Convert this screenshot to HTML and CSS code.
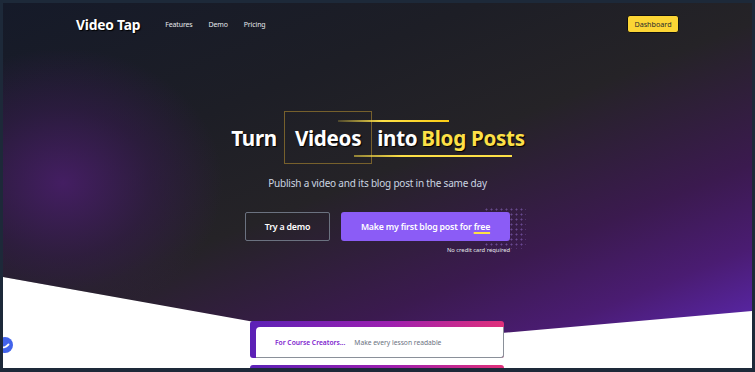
FILE: index.html
```html
<!DOCTYPE html>
<html lang="en">
<head>
<meta charset="utf-8">
<title>Video Tap</title>
<link rel="stylesheet" href="styles.css">
</head>
<body>
<div class="frame">
  <section class="hero">
    <div class="glow"></div>
    <nav class="nav">
      <div class="nav-left">
        <span class="logo">Video Tap</span>
        <ul class="links">
          <li>Features</li>
          <li>Demo</li>
          <li>Pricing</li>
        </ul>
      </div>
      <button class="dash">Dashboard</button>
    </nav>
    <div class="hero-body">
      <h1 class="title">
        <span>Turn</span>
        <span class="boxed">Videos</span>
        <span>into</span>
        <span class="yellow">Blog Posts</span>
        <i class="line line-top"></i>
        <i class="line line-bottom"></i>
      </h1>
      <p class="sub">Publish a video and its blog post in the same day</p>
      <div class="actions">
        <button class="btn-outline">Try a demo</button>
        <div class="cta-wrap">
          <div class="dots"></div>
          <button class="btn-primary">Make my first blog post for <u>free</u></button>
          <span class="note">No credit card required</span>
        </div>
      </div>
    </div>
  </section>
  <div class="cards">
    <div class="card">
      <div class="card-inner">
        <span class="tag">For Course Creators...</span>
        <span class="desc">Make every lesson readable</span>
      </div>
    </div>
    <div class="card card-next"></div>
  </div>
  <div class="chat">
    <svg viewBox="0 0 16 16" width="16" height="16"><path d="M4.5 9.5 Q7 12 11.5 7.5" fill="none" stroke="#fff" stroke-width="1.8" stroke-linecap="round"/></svg>
  </div>
</div>
</body>
</html>
```

FILE: styles.css
```css
* { box-sizing: border-box; margin: 0; padding: 0; }
html, body { width: 755px; height: 372px; overflow: hidden; }
body { font-family: "Noto Sans", "Open Sans", sans-serif; background: #1d2939; }

.frame {
  position: relative;
  width: 755px;
  height: 372px;
  border: 3px solid #1d2939;
  border-bottom-width: 4px;
  background: linear-gradient(172deg, #f3eefc 0%, #ffffff 35%);
  overflow: hidden;
}

.hero {
  position: relative;
  height: 341px;
  clip-path: polygon(0 0, 100% 0, 100% 308px, 50% 341px, 0 274px);
  background: linear-gradient(158deg, #151a29 0%, #1d1e26 30%, #252327 50%, #3b1a4f 72%, #4a1c72 85%, #5d29b6 100%);
}
.glow {
  position: absolute;
  left: -100px;
  top: 45px;
  width: 320px;
  height: 270px;
  border-radius: 50%;
  background: radial-gradient(closest-side, rgba(72, 30, 105, 0.9), rgba(58, 26, 84, 0.5) 55%, rgba(40, 20, 50, 0) 100%);
}

.nav {
  position: relative;
  height: 42px;
  padding: 0 73px 0 73px;
  display: flex;
  align-items: center;
  justify-content: space-between;
}
.nav-left { display: flex; align-items: center; gap: 25px; }
.logo { color: #fff; font-weight: 700; font-size: 13.8px; letter-spacing: -0.2px; text-shadow: 1px 1px 1px #000; }
.links { list-style: none; display: flex; gap: 16px; color: #e5e7eb; font-size: 7px; letter-spacing: -0.15px; }
.dash {
  font-family: inherit;
  font-size: 7.2px;
  color: #2b2b2b;
  background: #fcd535;
  border: 1px solid #111;
  border-radius: 3px;
  width: 52px;
  height: 18px;
  margin-top: -1px;
}

.hero-body {
  position: relative;
  display: flex;
  flex-direction: column;
  align-items: center;
  padding-top: 66px;
}
.title {
  position: relative;
  display: flex;
  align-items: center;
  gap: 7px;
  font-size: 20.6px;
  font-weight: 700;
  color: #fff;
  letter-spacing: -0.3px;
  text-shadow: 1px 1px 1px #000;
  margin-left: 1px;
}
.boxed {
  display: flex;
  align-items: center;
  height: 53px;
  padding: 0 10px;
  border: 1px solid rgba(190, 150, 50, 0.55);
  margin-right: -2px;
}
.yellow { color: #fde047; margin-left: -3px; }
.line { position: absolute; height: 2px; display: block; }
.line-top { left: 107px; width: 111px; top: 9px; background: linear-gradient(90deg, rgba(253, 224, 71, 0.2), #fde047 40%, #facc15); }
.line-bottom { left: 123px; width: 158px; top: 44px; background: linear-gradient(90deg, rgba(253, 224, 71, 0.5), #fde047 30%, #fde047); }

.sub {
  margin-top: 11px;
  color: #cbd5e1;
  font-size: 10px;
  letter-spacing: -0.2px;
  line-height: 16px;
}

.actions {
  margin-top: 21px;
  display: flex;
  gap: 11px;
  align-items: flex-start;
}
.btn-outline {
  font-family: inherit;
  width: 85px;
  height: 29px;
  background: transparent;
  border: 1px solid #6b7280;
  border-radius: 2px;
  color: #fff;
  font-size: 8.8px;
  letter-spacing: -0.2px;
  font-weight: 600;
}
.cta-wrap { position: relative; display: flex; flex-direction: column; align-items: flex-end; }
.dots {
  position: absolute;
  left: 143px;
  top: -5px;
  width: 42px;
  height: 42px;
  background-image: radial-gradient(circle, rgba(170, 130, 240, 0.45) 0.9px, transparent 1.1px);
  background-size: 5px 5px;
}
.btn-primary {
  position: relative;
  font-family: inherit;
  width: 169px;
  height: 29px;
  background: #8b5cf6;
  border: 0;
  border-radius: 3px;
  color: #fff;
  font-size: 8.8px;
  letter-spacing: -0.2px;
  font-weight: 600;
}
.btn-primary u { text-decoration-color: #fde047; text-decoration-thickness: 2px; text-underline-offset: 2px; }
.note {
  margin-top: 5px;
  color: #e5e7eb;
  font-size: 5.8px;
  line-height: 8px;
}

.cards {
  position: relative;
  margin-top: -23px;
  display: flex;
  flex-direction: column;
  align-items: center;
  gap: 7px;
  padding-right: 1px;
}
.card {
  width: 254px;
  padding: 6px 0 0 6px;
  border-radius: 3px;
  background: linear-gradient(90deg, #5b21b6 0%, #9d1fb0 55%, #e0307a 100%);
}
.card-inner {
  height: 31px;
  background: #fff;
  border: 1px solid #8a9099;
  border-top: 0;
  border-left: 0;
  border-radius: 4px 0 3px 0;
  display: flex;
  align-items: center;
  gap: 9px;
  padding-left: 19px;
  font-size: 6.7px;
}
.tag { color: #7e22ce; font-weight: 600; }
.desc { color: #6b7280; }
.card-next { height: 10px; }

.chat {
  position: absolute;
  left: -6px;
  top: 334px;
  width: 16px;
  height: 16px;
  border-radius: 50%;
  background: #4263eb;
  display: flex;
  align-items: center;
  justify-content: center;
}
```
